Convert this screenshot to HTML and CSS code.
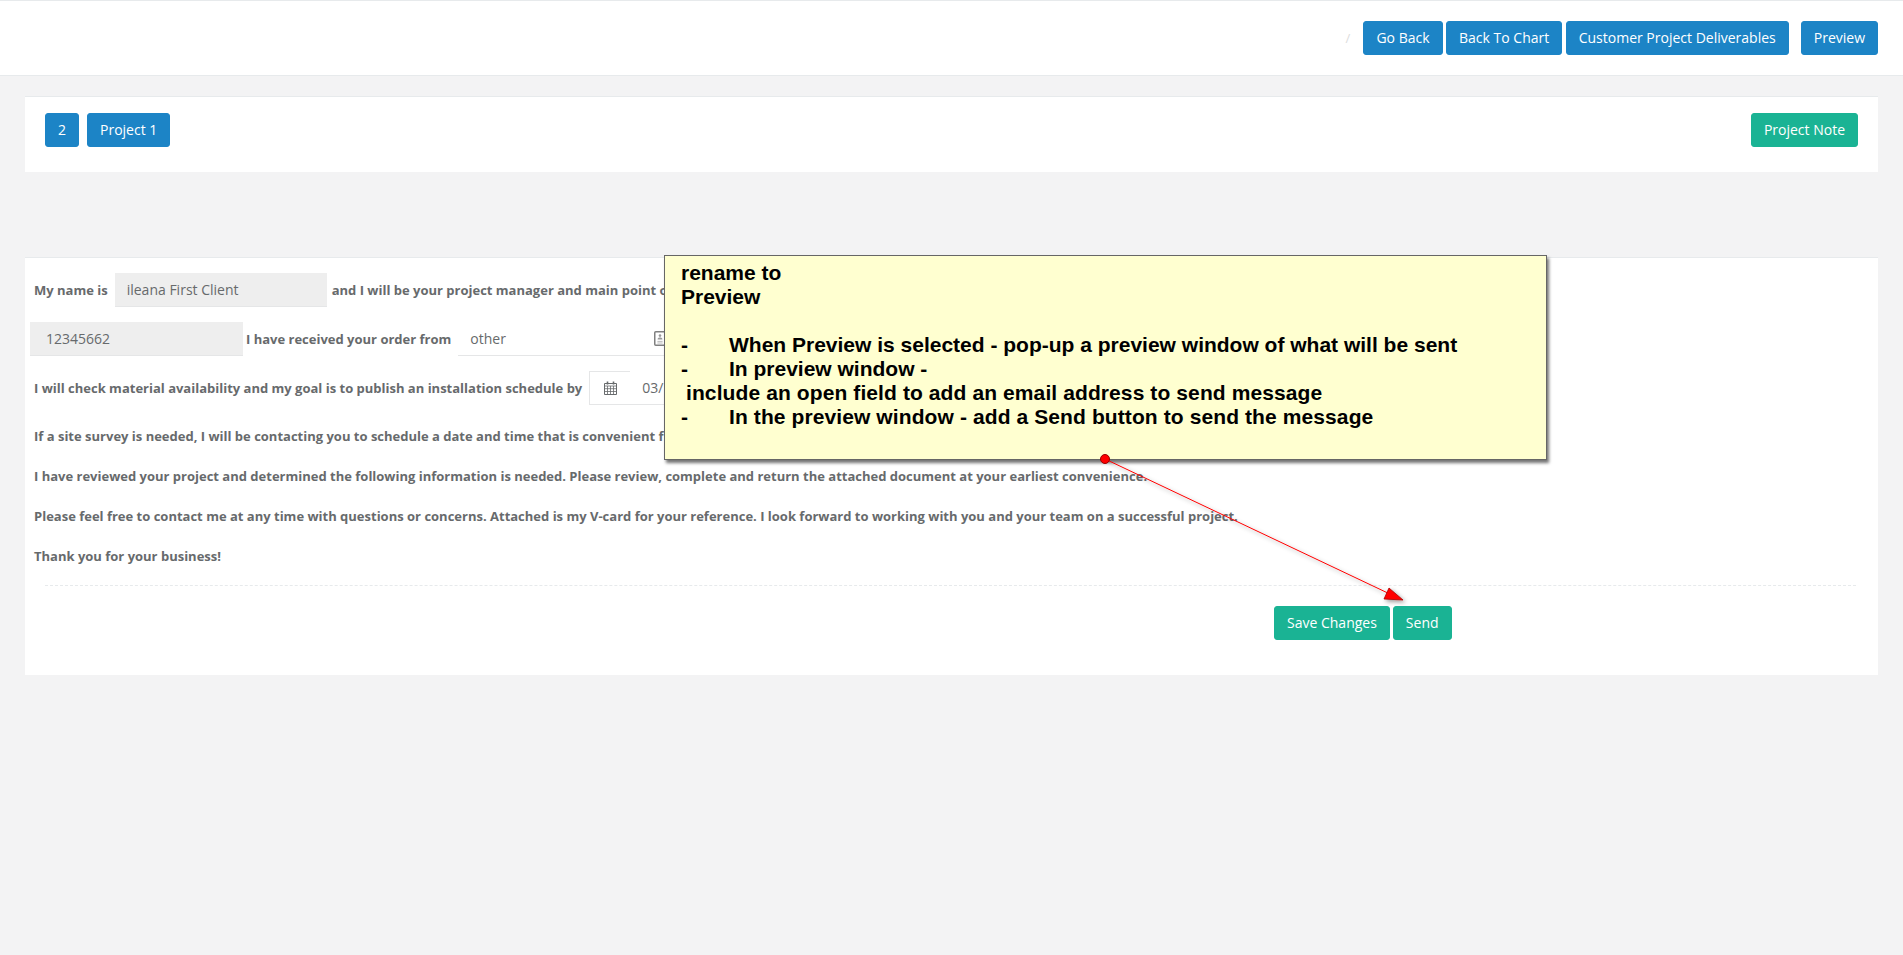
FILE: index.html
```html
<!DOCTYPE html>
<html lang="en">
  <head>
    <meta charset="UTF-8" />
    <meta name="viewport" content="width=device-width, initial-scale=1.0" />
    <title>Project Message</title>
    <link rel="stylesheet" href="styles.css">
  </head>

  <body>
    <div class="top-bar">
      <span class="crumb-slash">/</span>
      <a class="btn btn-blue btn-tight">Go Back</a>
      <a class="btn btn-blue btn-tight">Back To Chart</a>
      <a class="btn btn-blue">Customer Project Deliverables</a>
      <a class="btn btn-blue">Preview</a>
    </div>

    <div class="panel project-panel">
      <div class="project-left">
        <a class="btn btn-blue">2</a>
        <a class="btn btn-blue">Project 1</a>
      </div>
      <a class="btn btn-green">Project Note</a>
    </div>

    <div class="panel message-panel">
      <div class="line line-name">
        <span>My name is</span>
        <span class="field field-name">ileana First Client</span>
        <span>and I will be your project manager and main point o</span>
      </div>
      <div class="line line-order">
        <span class="field field-number">12345662</span>
        <span>I have received your order from</span>
        <span class="select-field">
          other
          <svg class="card-icon" width="12" height="15" viewBox="0 0 12 15">
            <rect x="0.75" y="0.75" width="10.5" height="13.5" rx="1" fill="#fff" stroke="#808080" stroke-width="1.5" />
            <circle cx="6" cy="4.6" r="1.3" fill="#999" />
            <path d="M3.6 8.6c0-1.4 1-2 2.4-2s2.4.6 2.4 2z" fill="#999" />
            <path d="M3.4 10.4h5.2M3.4 12h5.2" stroke="#bbb" />
          </svg>
        </span>
      </div>
      <div class="line line-date">
        <span>I will check material availability and my goal is to publish an installation schedule by</span>
        <span class="date-group">
          <span class="date-addon">
            <svg width="13" height="14" viewBox="0 0 13 14">
              <path d="M0.5 2.5h12v11h-12z" fill="none" stroke="#676a6c" />
              <path d="M0.5 5h12M0.5 7.7h12M0.5 10.5h12M3.5 5v8.5M6.5 5v8.5M9.5 5v8.5" stroke="#676a6c" stroke-width="0.8" />
              <path d="M3.5 0.5v3M9.5 0.5v3" stroke="#676a6c" stroke-width="1.6" />
            </svg>
          </span>
          <span class="date-value">03/</span>
        </span>
      </div>
      <p>If a site survey is needed, I will be contacting you to schedule a date and time that is convenient f</p>
      <p>I have reviewed your project and determined the following information is needed. Please review, complete and return the attached document at your earliest convenience.</p>
      <p>Please feel free to contact me at any time with questions or concerns. Attached is my V-card for your reference. I look forward to working with you and your team on a successful project.</p>
      <p>Thank you for your business!</p>
      <div class="dashed"></div>
      <div class="actions">
        <a class="btn btn-green">Save Changes</a>
        <a class="btn btn-green">Send</a>
      </div>
    </div>

    <div class="note">
      <div>rename to</div>
      <div>Preview</div>
      <div class="note-blank"></div>
      <div class="note-item"><span class="note-dash">-</span>When Preview is selected - pop-up a preview window of what will be sent</div>
      <div class="note-item"><span class="note-dash">-</span>In preview window -</div>
      <div class="note-indent note-wide">include an open field to add an email address to send message</div>
      <div class="note-item note-wide"><span class="note-dash">-</span>In the preview window - add a Send button to send the message</div>
    </div>

    <svg class="arrow" width="1903" height="955" viewBox="0 0 1903 955">
      <defs>
        <filter id="arrow-shadow" x="-20%" y="-20%" width="140%" height="140%">
          <feDropShadow dx="2" dy="2" stdDeviation="2" flood-color="#000" flood-opacity="0.4" />
        </filter>
      </defs>
      <g filter="url(#arrow-shadow)">
        <line x1="1105" y1="459" x2="1392" y2="595" stroke="#f00" stroke-width="1" />
        <path d="M1403 600 L1384 599 L1389 588 Z" fill="#f00" stroke="#a00" stroke-width="0.8" />
      </g>
      <circle cx="1105" cy="459" r="4.5" fill="#f00" stroke="#900" />
    </svg>
  </body>
</html>
```

FILE: styles.css
```css
html,
body {
  margin: 0;
  min-height: 955px;
}

body {
  position: relative;
  background: #f3f3f4;
  font-family: "Open Sans", Arial, sans-serif;
  font-size: 13px;
  color: #676a6c;
  overflow: hidden;
}

.btn {
  display: inline-block;
  box-sizing: border-box;
  height: 34px;
  line-height: 32px;
  padding: 0 12px;
  border: 1px solid transparent;
  border-radius: 3px;
  font-size: 14px;
  font-weight: 400;
  color: #fff;
  white-space: nowrap;
}

.btn-blue {
  background: #1c84c6;
  border-color: #1c84c6;
}

.btn-green {
  background: #1ab394;
  border-color: #1ab394;
}

.top-bar {
  display: flex;
  align-items: center;
  justify-content: flex-end;
  box-sizing: border-box;
  height: 76px;
  padding: 0 25px 1px 0;
  background: #fff;
  border-top: 1px solid #e7eaec;
  border-bottom: 1px solid #e7eaec;
  gap: 12px;
}

.btn-tight {
  margin-right: -8.5px;
}

.crumb-slash {
  margin-right: 1px;
  color: #ddd;
  font-size: 13px;
}

.panel {
  margin: 0 25px;
  background: #fff;
  border-top: 1px solid #e7eaec;
}

.project-panel {
  display: flex;
  justify-content: space-between;
  box-sizing: border-box;
  height: 76px;
  margin-top: 20px;
  padding: 16px 20px 0;
}

.project-left {
  display: flex;
  align-items: flex-start;
  gap: 8px;
}

.message-panel {
  box-sizing: border-box;
  height: 418px;
  margin-top: 85px;
  padding: 15px 9px 0;
  font-weight: 700;
}

.line {
  display: flex;
  align-items: center;
  height: 34px;
  white-space: nowrap;
}

.line-name {
  gap: 5px;
  padding-bottom: 1px;
  box-sizing: content-box;
  height: 33px;
}

.line-name .field-name {
  margin: 1px 0 0 2px;
}

.line-order {
  margin: 15px 0 0 -4px;
  gap: 3px;
}

.line-date {
  margin-top: 15px;
  padding-bottom: 1px;
  box-sizing: content-box;
  height: 33px;
}

.field {
  box-sizing: border-box;
  height: 34px;
  line-height: 34px;
  background: #eee;
  border-bottom: 1px solid #e5e6e7;
  font-size: 14px;
  font-weight: 400;
  color: #676a6c;
}

.field-name {
  width: 212px;
  padding-left: 12px;
}

.field-number {
  width: 213px;
  padding-left: 16px;
}

.select-field {
  display: flex;
  align-items: center;
  justify-content: space-between;
  box-sizing: border-box;
  width: 210px;
  height: 34px;
  margin-left: 4px;
  padding: 0 0 0 12px;
  border-bottom: 1px solid #e5e6e7;
  font-size: 14px;
  font-weight: 400;
}

.card-icon {
  margin-right: 2px;
}

.date-group {
  display: flex;
  align-items: stretch;
  box-sizing: border-box;
  height: 34px;
  margin: 1px 0 0 7px;
  font-size: 14px;
  font-weight: 400;
}

.date-addon {
  display: flex;
  align-items: center;
  justify-content: center;
  box-sizing: border-box;
  width: 41px;
  border: 1px solid #e5e6e7;
  border-right: 0;
}

.date-value {
  width: 60px;
  padding-left: 12px;
  line-height: 33px;
  border-bottom: 1px solid #e5e6e7;
}

p {
  height: 18px;
  margin: 0;
  line-height: 18px;
  white-space: nowrap;
}

.line-date + p {
  margin-top: 22px;
}

p + p {
  margin-top: 22px;
}

.dashed {
  margin: 20px 13px 0 11px;
  border-top: 1px dashed #e7eaec;
}

.actions {
  display: flex;
  gap: 3px;
  margin: 20px 0 0 1240px;
}

.note {
  position: absolute;
  left: 664px;
  top: 255px;
  box-sizing: border-box;
  width: 883px;
  height: 205px;
  padding: 5px 16px;
  background: #ffffd0;
  border: 1px solid #666;
  box-shadow: 2px 3px 3px rgba(0, 0, 0, 0.55);
  font-family: "Liberation Sans", Arial, sans-serif;
  font-size: 21px;
  font-weight: 700;
  line-height: 24px;
  color: #000;
}

.note-blank {
  height: 24px;
}

.note-item {
  display: flex;
}

.note-dash {
  width: 48px;
}

.note-indent {
  padding-left: 5px;
}

.note-wide {
  letter-spacing: 0.1px;
}

.arrow {
  position: absolute;
  left: 0;
  top: 0;
  pointer-events: none;
}
```
